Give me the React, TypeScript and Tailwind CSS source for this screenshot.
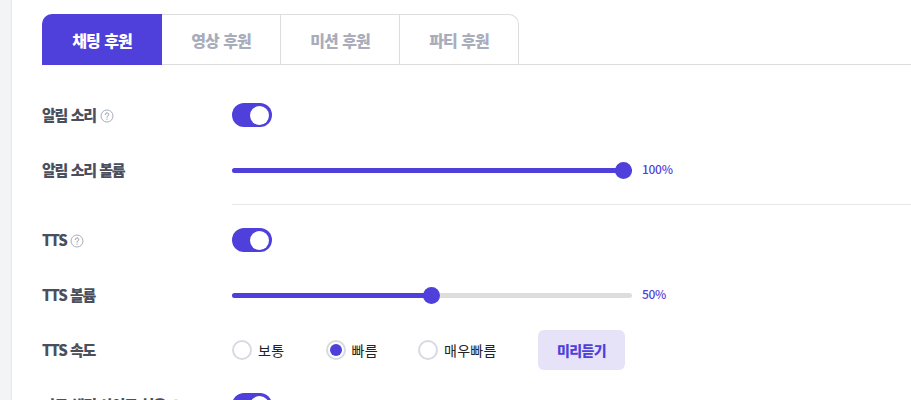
import { Fragment } from 'react';

const font = { fontFamily: '"Noto Sans CJK KR", sans-serif' };

function Help() {
  return (
    <svg width="14" height="14" viewBox="0 0 14 14" fill="none" className="ml-[4px] mt-[1px] shrink-0">
      <circle cx="7" cy="7" r="6" stroke="#a9aebd" strokeWidth="1" />
      <path d="M5.3 5.6c0-1 .7-1.6 1.7-1.6s1.7.6 1.7 1.5c0 1.3-1.7 1.4-1.7 2.7" stroke="#8f94a5" strokeWidth="1" strokeLinecap="round" />
      <circle cx="7" cy="10.1" r=".6" fill="#8f94a5" />
    </svg>
  );
}

function Toggle() {
  return (
    <div className="w-10 h-6 rounded-full bg-[#4f3fdb] flex items-center justify-end pr-[3px]">
      <div className="w-[19px] h-[19px] rounded-full bg-white" />
    </div>
  );
}

function Slider({ value }: { value: number }) {
  return (
    <div className="flex items-center">
      <div className="relative w-[400px] h-[5px] rounded-full bg-[#dddddd]">
        <div className="h-full rounded-full bg-[#4f3fdb]" style={{ width: `${value}%` }} />
        <div
          className="absolute top-[-6px] w-[17px] h-[17px] -ml-[9px] rounded-full bg-[#4f3fdb]"
          style={{ left: `${value === 100 ? 98 : value}%` }}
        />
      </div>
      <span className="ml-[10px] -mt-[2px] text-xs font-medium text-[#4f3fdb] tracking-[-0.3px]">{value}%</span>
    </div>
  );
}

function Radio({ label, checked, className }: { label: string; checked?: boolean; className: string }) {
  return (
    <div className={`flex items-center ${className}`}>
      <div className="w-5 h-5 rounded-full border-2 border-[#d8dae3] flex items-center justify-center">
        {checked && <div className="w-3 h-3 rounded-full bg-[#4f3fdb]" />}
      </div>
      <span className="ml-[6px] -mt-[1px] text-sm text-[#222222] tracking-[0.3px]">{label}</span>
    </div>
  );
}

function Row({ label, help, className, children }: { label: string; help?: boolean; className: string; children: React.ReactNode }) {
  return (
    <div className={`flex items-center ${className}`}>
      <div className="w-[190px] flex items-center shrink-0">
        <span className="text-[15px] font-black text-[#4b4f5c] tracking-[-1.3px] [word-spacing:1.5px] leading-5">{label}</span>
        {help && <Help />}
      </div>
      {children}
    </div>
  );
}

const tabs = ['채팅 후원', '영상 후원', '미션 후원', '파티 후원'];

export default function App() {
  return (
    <div className="h-[400px] overflow-hidden bg-white flex" style={font}>
      <div className="w-[12px] shrink-0 bg-[#f3f4f6] border-r border-[#e9e9ec]" />
      <div className="flex-1 min-w-0 pt-[14px] pl-[30px]">
        <div className="flex h-[51px] border-b border-[#dddddd]">
          {tabs.map((tab, i) => (
            <Fragment key={tab}>
              <div
                className={
                  i === 0
                    ? 'w-[120px] h-[51px] rounded-tl-[10px] bg-[#4f3fdb] text-white flex items-center justify-center text-base font-black tracking-[-1px] [word-spacing:2px]'
                    : `w-[119px] h-[50px] border-t border-r border-[#dddddd] text-[#a9adbb] flex items-center justify-center text-base font-black tracking-[-1px] [word-spacing:2px] ${i === 3 ? 'rounded-tr-[10px]' : ''}`
                }
              >
                {tab}
              </div>
            </Fragment>
          ))}
        </div>
        <Row label="알림 소리" help className="mt-[26px] h-[48px]">
          <Toggle />
        </Row>
        <Row label="알림 소리 볼륨" className="mt-[7px] h-[48px]">
          <Slider value={100} />
        </Row>
        <div className="ml-[190px] mt-[10px] border-t border-[#e8e8e8]" />
        <Row label="TTS" help className="mt-[11px] h-[48px]">
          <Toggle />
        </Row>
        <Row label="TTS 볼륨" className="mt-[7px] h-[48px]">
          <Slider value={50} />
        </Row>
        <Row label="TTS 속도" className="mt-[7px] h-[48px]">
          <Radio label="보통" className="w-[93.5px]" />
          <Radio label="빠름" checked className="w-[92.5px]" />
          <Radio label="매우빠름" className="w-[120px]" />
          <button className="w-[87px] h-10 rounded-md bg-[#e6e3f8] text-[#4f3fdb] text-sm font-black tracking-[-0.6px]">미리듣기</button>
        </Row>
        <Row label="자동 채팅 사이트 허용" help className="mt-[7px] h-[48px]">
          <Toggle />
        </Row>
      </div>
    </div>
  );
}
